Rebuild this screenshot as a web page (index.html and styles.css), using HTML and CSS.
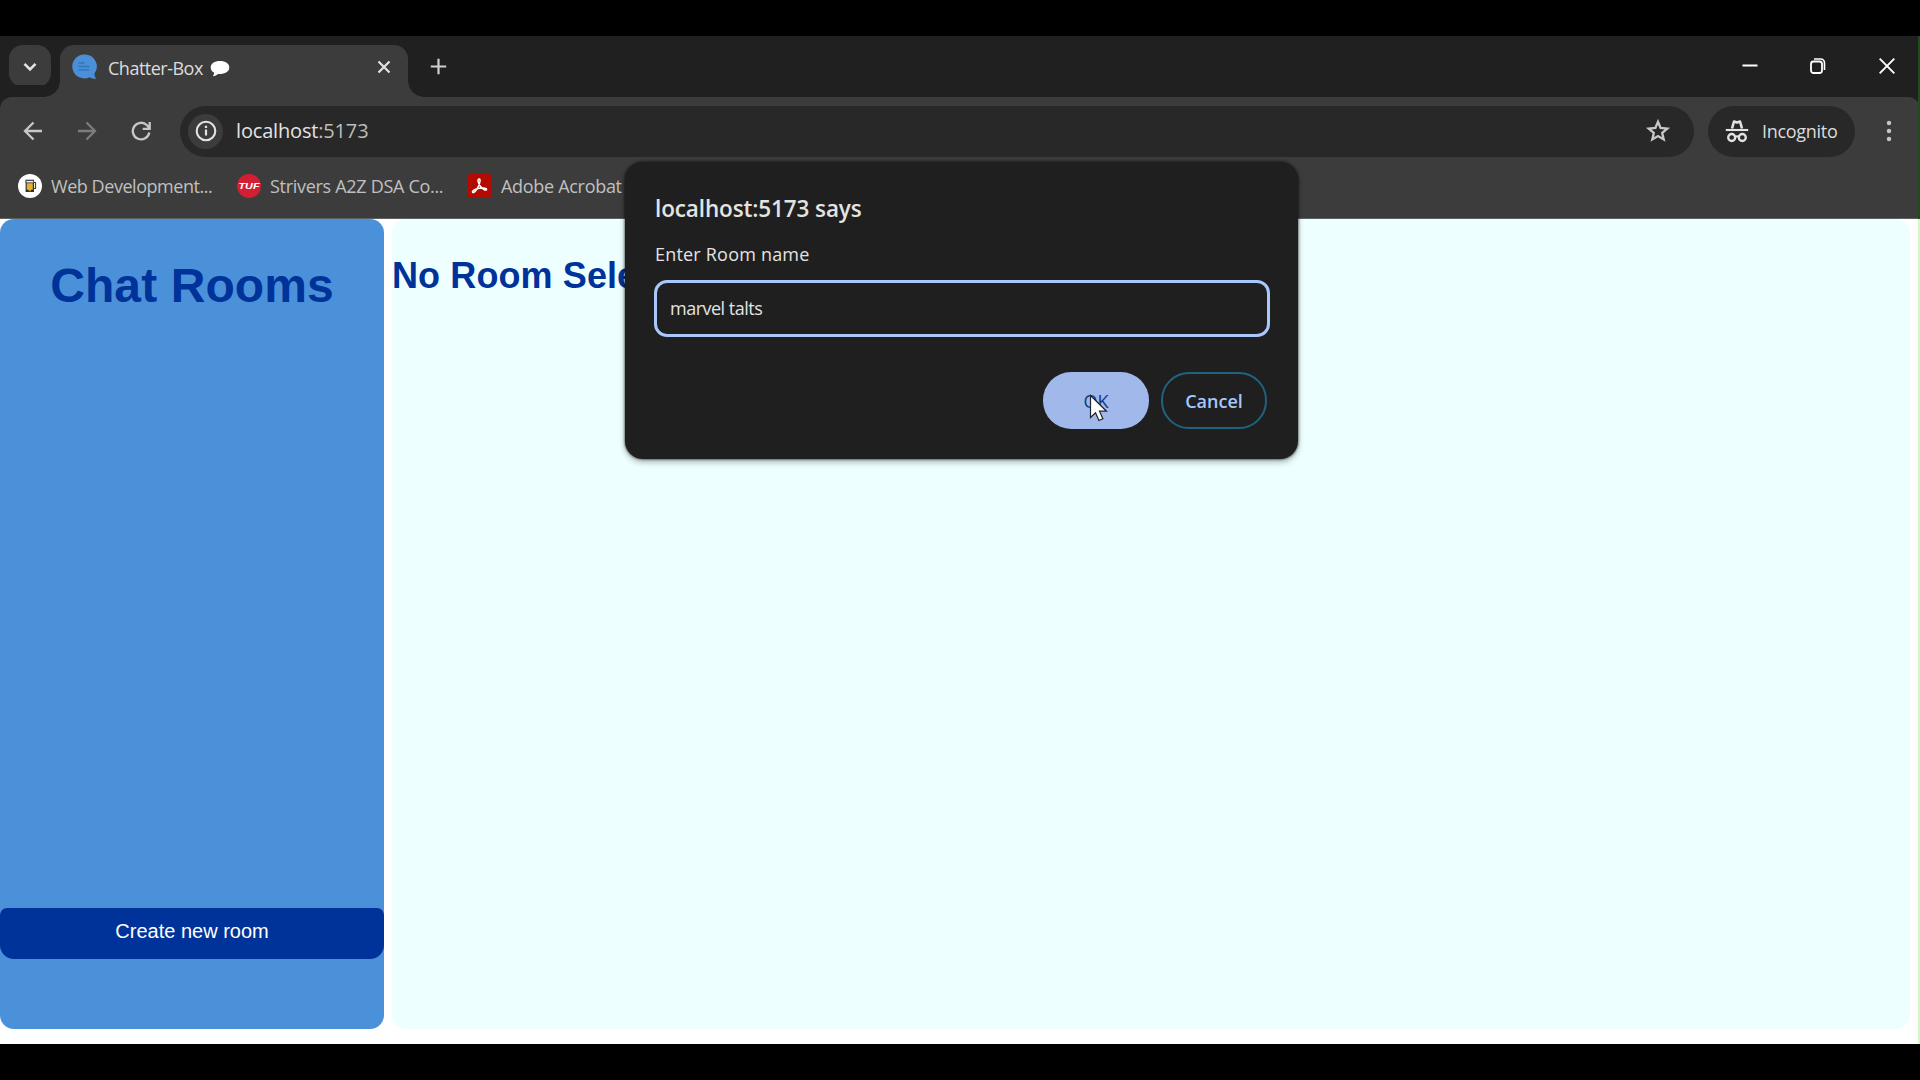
FILE: index.html
```html
<!DOCTYPE html>
<html lang="en">
<head>
<meta charset="utf-8">
<title>Chatter-Box</title>
<link rel="stylesheet" href="styles.css">
</head>
<body>
<div class="window">
  <header class="tabstrip">
    <button class="tab-search" aria-label="Search tabs"><svg width="14" height="10" viewBox="0 0 14 10"><path d="M1.500 1.800 7 7.300l5.500-5.500" fill="none" stroke="#e3e3e3" stroke-width="2.600"/></svg></button>
    <div class="tab">
      <svg class="favicon" width="25" height="26" viewBox="0 0 25 26"><path d="M12 .5a12 12 0 1 0 5.500 22.800c2 1 4 1.700 7 1.700-1.500-1.500-2-3-2-5.500A12 12 0 0 0 12 .5Z" fill="#4a90d9"/><path d="M6.500 9h6M6.500 12.500h11M6.500 16h11" stroke="#3474b8" stroke-width="1.300"/></svg>
      <span class="tab-title">Chatter-Box</span>
      <svg class="bubble" width="20" height="17" viewBox="0 0 20 17"><path d="M10 1C4.500 1 .7 3.600 .7 7.500c0 2.300 1.200 4 3.300 5.100.2 1.300-.3 2.600-1.200 3.600 2.200-.2 4-1 5.200-2.200 6.600.4 11.300-2.300 11.300-6.500C19.300 3.600 15.500 1 10 1Z" fill="#fff"/></svg>
      <svg class="tab-close" width="14" height="14" viewBox="0 0 14 14"><path d="m1.500 1.500 11 11m0-11-11 11" stroke="#e3e3e3" stroke-width="2.200"/></svg>
    </div>
    <svg class="new-tab" width="17" height="17" viewBox="0 0 17 17"><path d="M8.500 .8v15.400M.8 8.500h15.400" stroke="#d0d0d0" stroke-width="2.200"/></svg>
    <div class="controls">
      <svg width="16" height="18" viewBox="0 0 16 18"><path d="M.5 8.500h15" stroke="#fff" stroke-width="2"/></svg>
      <svg width="16" height="18" viewBox="0 0 16 18"><rect x="1" y="4.500" width="11" height="11.500" rx="2.500" fill="none" stroke="#fff" stroke-width="1.800"/><path d="M4 2h6.500A4 4 0 0 1 14.500 6v7" fill="none" stroke="#fff" stroke-width="1.600"/></svg>
      <svg width="16" height="18" viewBox="0 0 16 18"><path d="m.7 1.700 14.600 14.600m0-14.600L.7 16.300" stroke="#fff" stroke-width="1.900"/></svg>
    </div>
  </header>

  <div class="chrome">
    <div class="toolbar">
      <svg class="back" width="20" height="20" viewBox="0 0 20 20"><path d="M19 10H2m8.500-8.500L2 10l8.500 8.500" fill="none" stroke="#c7c7c7" stroke-width="2.300"/></svg>
      <svg class="forward" width="20" height="20" viewBox="0 0 20 20"><path d="M1 10h17M9.500 1.500 18 10l-8.500 8.500" fill="none" stroke="#7c7c7c" stroke-width="2.300"/></svg>
      <svg class="reload" width="20" height="20" viewBox="0 0 20 20"><path d="M18.300 11.500A8.300 8.300 0 1 1 16 4.200L18.300 7M18.700 1v6.900h-7" fill="none" stroke="#c7c7c7" stroke-width="2.300"/></svg>
      <div class="omnibox">
        <span class="info"><svg width="22" height="22" viewBox="0 0 22 22"><circle cx="11" cy="11" r="9.300" fill="none" stroke="#e3e3e3" stroke-width="2.100"/><path d="M11 9.600v6M11 5.800v2.300" stroke="#e3e3e3" stroke-width="2.200"/></svg></span>
        <span class="url">localhost<span class="port">:5173</span></span>
        <svg class="star" width="26" height="26" viewBox="0 0 26 26"><path d="m13 3.800 2.600 6.200 6.700.6-5.100 4.400 1.500 6.500L13 18.100l-5.700 3.400 1.500-6.500-5.100-4.400 6.700-.6Z" fill="none" stroke="#c7c7c7" stroke-width="2.300"/></svg>
      </div>
      <div class="incognito">
        <svg width="24" height="24" viewBox="0 0 24 24"><path d="M7 9.500 9 2.500l3 1 3-1 2 7" fill="none" stroke="#e3e3e3" stroke-width="2.600" stroke-linejoin="round"/><path d="M.8 11h22.400" stroke="#e3e3e3" stroke-width="2.100"/><circle cx="6.700" cy="18.500" r="3.500" fill="none" stroke="#e3e3e3" stroke-width="2.300"/><circle cx="17.300" cy="18.500" r="3.500" fill="none" stroke="#e3e3e3" stroke-width="2.300"/><path d="M10 18q2-1.500 4 0" fill="none" stroke="#e3e3e3" stroke-width="1.800"/></svg>
        <span class="incognito-label">Incognito</span>
      </div>
      <svg class="menu" width="6" height="24" viewBox="0 0 6 24"><g fill="#c7c7c7"><circle cx="3" cy="4" r="2.200"/><circle cx="3" cy="12" r="2.200"/><circle cx="3" cy="20" r="2.200"/></g></svg>
    </div>
    <nav class="bookmarks">
      <a class="bookmark"><svg width="24" height="26" viewBox="0 0 24 26"><circle cx="12" cy="13" r="12" fill="#fff"/><path d="M15.500 9.500h2v6h-2" fill="none" stroke="#444" stroke-width="1.200"/><rect x="8.200" y="7.300" width="7.200" height="11" fill="#e7b02c" stroke="#333" stroke-width="1.200"/><path d="M8 7.600h7.600v2.200H8Z" fill="#fff" stroke="#333" stroke-width=".8"/><path d="M8 16.800h2.500v1.800H8Zm5 0h2.500v1.800H13Z" fill="#222"/></svg><span class="bookmark-web">Web Development...</span></a>
      <a class="bookmark"><svg width="24" height="26" viewBox="0 0 24 26"><circle cx="12" cy="13" r="12" fill="#d31f33"/><text class="tuf" x="12" y="16" text-anchor="middle" textLength="21" lengthAdjust="spacingAndGlyphs">TUF</text></svg><span class="bookmark-dsa">Strivers A2Z DSA Co...</span></a>
      <a class="bookmark"><svg width="25" height="26" viewBox="0 0 25 26"><rect x=".5" y="1" width="24" height="24" rx="3" fill="#b30b00"/><path d="M12.300 6c-2 0-1.600 3.200.5 6.500 2.300 3.500 5.700 5.300 6.600 4.200 1.200-1.500-3.200-2.200-7.200-1.400-4.500.9-7.400 2.700-6.600 4 .9 1.300 3.800-1.700 5.700-5.800 1.800-4 2.400-7.500 1-7.500Z" fill="none" stroke="#fff" stroke-width="1.500"/></svg><span class="bookmark-pdf">Adobe Acrobat</span></a>
    </nav>
  </div>

  <main class="page">
    <aside class="sidebar">
      <h1 class="rooms-title">Chat Rooms</h1>
      <button class="create">Create new room</button>
    </aside>
    <section class="chat">
      <h2 class="chat-title">No Room Selected</h2>
    </section>
  </main>
  <div class="edge"></div>

  <div class="dialog" role="dialog">
    <div class="dialog-title">localhost:5173 says</div>
    <div class="dialog-message">Enter Room name</div>
    <div class="field">marvel talts</div>
    <div class="actions">
      <button class="ok">OK</button>
      <button class="cancel">Cancel</button>
    </div>
    <svg class="cursor" width="20" height="28" viewBox="0 0 20 28"><path d="M1.500 1.500v22l5-4.700 3.400 7.700 4-1.800-3.400-7.500h7Z" fill="#fff" stroke="#20242c" stroke-width="1.200"/></svg>
  </div>
</div>
</body>
</html>
```
FILE: styles.css
```css
* { box-sizing: border-box; }
body { margin: 0; background: #000; font-family: "Open Sans", sans-serif; white-space: nowrap; }
svg { display: block; flex: none; }
button { border: 0; padding: 0; font: inherit; }

.window { position: relative; display: flex; flex-direction: column; width: 1920px; height: 1080px; padding: 36px 0; overflow: hidden; }

/* Tab strip */
.tabstrip { display: flex; height: 61px; background: #202020; padding: 9px 25px 0 9px; }
.tab-search { display: grid; place-items: center; width: 42px; height: 42px; padding-top: 1px; border-radius: 14px; background: #3c3c3c; }
.tab { position: relative; display: flex; align-items: center; width: 348px; height: 52px; margin-left: 9px; padding: 0 17px 9px 12px; border-radius: 14px 14px 0 0; background: #3c3c3c; }
.tab::before, .tab::after { content: ""; position: absolute; bottom: 0; width: 16px; height: 16px; }
.tab::before { left: -16px; background: radial-gradient(circle at 0 0, transparent 15.500px, #3c3c3c 16px); }
.tab::after { right: -16px; background: radial-gradient(circle at 100% 0, transparent 15.500px, #3c3c3c 16px); }
.tab-title { margin-left: 11px; padding-top: 2px; color: #dcdcdc; font-size: 18px; letter-spacing: -.5px; }
.bubble { margin: 3px 0 0 7px; }
.tab-close { margin-left: auto; }
.new-tab { margin: 13px 0 0 22px; }
.controls { display: flex; gap: 53px; margin: 12px 0 0 auto; }
.controls svg:first-child { margin-right: -1px; }

/* Toolbar and bookmarks */
.chrome { height: 122px; background: #3c3c3c; border-bottom: 1px solid #5d6060; border-radius: 12px 12px 0 0; box-shadow: 0 -12px 0 #202020; }
.toolbar { display: flex; align-items: center; height: 68px; padding: 0 28px 0 23px; }
.forward { margin-left: 34px; }
.reload { margin-left: 34px; }
.omnibox { display: flex; align-items: center; width: 1514px; height: 51px; margin-left: 29px; padding: 0 23px 0 8px; border-radius: 26px; background: #282828; }
.info { display: grid; place-items: center; width: 35px; height: 35px; border-radius: 50%; background: #3c3c3c; }
.url { margin-left: 13px; padding-bottom: 1px; color: #e3e3e3; font-size: 20px; letter-spacing: -.17px; }
.port { color: #bdbdbd; }
.star { margin-left: auto; }
.incognito { display: flex; align-items: center; width: 147px; height: 51px; margin-left: 14px; padding-left: 17px; border-radius: 26px; background: #282828; }
.incognito-label { margin-left: 13px; color: #dcdcdc; font-size: 18px; letter-spacing: -.3px; }
.menu { margin-left: auto; }
.bookmarks { display: flex; align-items: center; height: 42px; padding-left: 18px; color: #c0c0c0; font-size: 18px; }
.bookmark { display: flex; align-items: center; gap: 9px; width: 219px; }
.bookmark:nth-child(2) { width: 230px; }
.bookmark-web { letter-spacing: -.45px; }
.bookmark-dsa { letter-spacing: -.3px; }
.bookmark-pdf { letter-spacing: -.3px; }
.tuf { font: italic bold 9px "Liberation Sans", sans-serif; fill: #fff; }

/* Chat page */
.page { display: flex; flex: 1; gap: 8px; padding: 0 10px 15px 0; background: #fff; color: #003399; font-family: "Liberation Sans", sans-serif; }
.sidebar { display: flex; flex-direction: column; width: 384px; border-radius: 14px; background: #4b91da; }
.rooms-title { margin: 38px 0 0; text-align: center; font-size: 48px; line-height: 58px; letter-spacing: .1px; }
.create { height: 51px; margin: auto 0 70px; padding-bottom: 4px; border-radius: 7px 7px 14px 14px; background: #003399; color: #fff; font-size: 20px; }
.chat { flex: 1; border-radius: 14px; background: #eeffff; }
.chat-title { margin: 35px 0 0; font-size: 36px; line-height: 44px; letter-spacing: .1px; }
.edge { position: absolute; right: 0; top: 36px; width: 2px; height: 1008px; background: linear-gradient(#1d4d1d 0 183px, #d4f8c8 183px); }

/* Prompt dialog */
.dialog { position: absolute; left: 625px; top: 162px; width: 673px; height: 297px; padding: 30px 29px 0; border-radius: 18px; background: #1f1f1f; color: #e3e3e3; box-shadow: 0 0 2px 1px rgba(0,0,0,.4), 0 3px 6px rgba(0,0,0,.3); }
.dialog-title { padding-left: 1px; font-size: 22.500px; font-weight: 600; line-height: 34px; letter-spacing: -.12px; }
.dialog-message { margin-top: 14px; padding-left: 1px; font-size: 18px; line-height: 28px; letter-spacing: .2px; }
.field { display: flex; align-items: center; width: 616px; height: 57px; margin-top: 12px; padding: 0 0 2px 13px; border: 3px solid #a8c7fa; border-radius: 13px; font-size: 18px; letter-spacing: -.5px; }
.actions { display: flex; gap: 12px; justify-content: flex-end; margin-top: 35px; padding-right: 2px; }
.actions button { width: 106px; height: 57px; border-radius: 28px; font-size: 18px; font-weight: 600; }
.actions .ok { background: #a0b8ea; color: #123a80; font-weight: 500; }
.actions .cancel { border: 2px solid #1f6380; background: transparent; color: #a8c7fa; }
.cursor { position: absolute; left: 464px; top: 232px; }
```
